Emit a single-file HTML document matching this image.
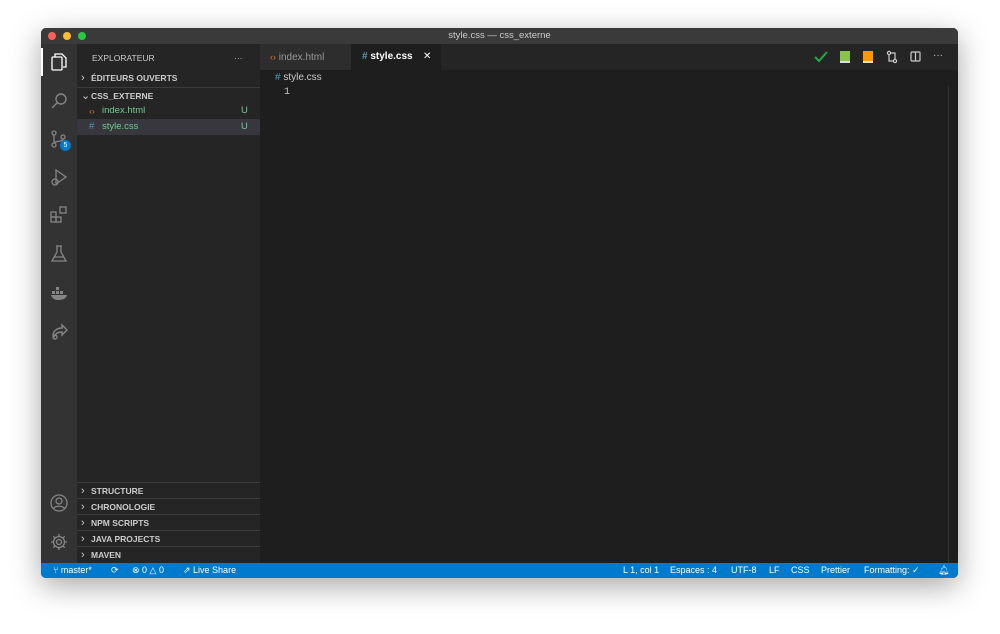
<!DOCTYPE html>
<html><head><meta charset="utf-8"><style>
*{margin:0;padding:0;box-sizing:border-box}
body{width:1000px;height:634px;background:#fff;font-family:"Liberation Sans",sans-serif;position:relative;overflow:hidden}
.win{position:absolute;left:41px;top:28px;width:917px;height:550px;background:#1e1e1e;border-radius:5px;overflow:hidden;box-shadow:0 8px 30px rgba(0,0,0,.35)}
.title{position:absolute;left:0;top:0;width:100%;height:16px;background:#3a3a3a;color:#ccc;font-size:9.5px;text-align:center;line-height:16px}
.dot{position:absolute;top:4px;width:8px;height:8px;border-radius:50%}
.act{position:absolute;left:0;top:16px;width:36px;height:519px;background:#333}
.side{position:absolute;left:36px;top:16px;width:183px;height:519px;background:#252526;color:#ccc;font-size:9.5px}
.row{position:absolute;left:0;width:183px;height:16px;line-height:16px}
.b{font-weight:bold;font-size:8.5px;padding-left:4px}
.sep{border-top:1px solid #3c3c3c}
.tabs{position:absolute;left:219px;top:16px;width:698px;height:26px;background:#252526}
.status{position:absolute;left:0;top:535px;width:100%;height:15px;background:#007acc;color:#fff;font-size:9px;line-height:15px}
.status span{position:absolute}
.ic{position:absolute;left:9px}
.ch{display:inline-block;width:10px;font-weight:normal;font-size:11px}
</style></head><body>
<div class="win">
<div class="title">style.css — css_externe
<div class="dot" style="left:7px;background:#fe5f57"></div><div class="dot" style="left:22px;background:#febc2e"></div><div class="dot" style="left:37px;background:#28c840"></div></div>
<div class="act">
<div style="position:absolute;left:0;top:4px;width:2px;height:28px;background:#fff"></div>
<svg class="ic" style="top:8px" width="18" height="20" viewBox="0 0 18 20" fill="none" stroke="#fff" stroke-width="1.3"><path d="M5 5V2h7l4 4v9h-3"/><rect x="2" y="5" width="10" height="13" rx="1"/></svg>
<svg class="ic" style="top:48px" width="18" height="18" fill="none" stroke="#858585" stroke-width="1.4"><circle cx="11" cy="7" r="5"/><path d="M7.5 10.5L2 16"/></svg>
<svg class="ic" style="top:86px" width="18" height="18" fill="none" stroke="#858585" stroke-width="1.3"><circle cx="4" cy="3" r="2"/><circle cx="4" cy="15" r="2"/><circle cx="13" cy="7" r="2"/><path d="M4 5v8M13 9c0 3-9 2-9 4"/></svg>
<div style="position:absolute;left:19px;top:96px;width:11px;height:11px;border-radius:50%;background:#007acc;color:#fff;font-size:7px;text-align:center;line-height:11px">5</div>
<svg class="ic" style="top:124px" width="18" height="18" fill="none" stroke="#858585" stroke-width="1.3"><path d="M6 2l10 7-10 7z"/><circle cx="5" cy="14" r="3"/></svg>
<svg class="ic" style="top:162px" width="18" height="18" fill="none" stroke="#858585" stroke-width="1.3"><rect x="1" y="6" width="5" height="5"/><rect x="1" y="11" width="5" height="5"/><rect x="6" y="11" width="5" height="5"/><rect x="10" y="1" width="6" height="6"/></svg>
<svg class="ic" style="top:201px" width="18" height="18" fill="none" stroke="#858585" stroke-width="1.3"><path d="M6 1h6M7 1v6l-5 9h14l-5-9V1M4 12h10"/></svg>
<svg class="ic" style="top:240px" width="18" height="18" fill="#858585"><rect x="2" y="7" width="3" height="3"/><rect x="6" y="7" width="3" height="3"/><rect x="10" y="7" width="3" height="3"/><rect x="6" y="3" width="3" height="3"/><path d="M1 11h16c-1 4-5 5-9 5s-6-2-7-5z"/></svg>
<svg class="ic" style="top:278px" width="18" height="18" fill="none" stroke="#858585" stroke-width="1.4"><path d="M3 14c0-5 4-8 9-8V3l5 5-5 5v-3c-4 0-6 1-8 5"/><circle cx="5" cy="15" r="2"/></svg>
<svg class="ic" style="top:450px" width="18" height="18" fill="none" stroke="#858585" stroke-width="1.3"><circle cx="9" cy="9" r="8"/><circle cx="9" cy="7" r="3"/><path d="M3.5 14.5c2-3 9-3 11 0"/></svg>
<svg class="ic" style="top:489px" width="18" height="18" fill="none" stroke="#858585" stroke-width="1.3"><circle cx="9" cy="9" r="2.5"/><path d="M9 1v3M9 14v3M1 9h3M14 9h3M3.3 3.3l2.1 2.1M12.6 12.6l2.1 2.1M3.3 14.7l2.1-2.1M12.6 5.4l2.1-2.1"/><circle cx="9" cy="9" r="5.5"/></svg>
</div>
<div class="side">
<div class="row" style="top:6px;padding-left:15px;font-size:8.5px">EXPLORATEUR<span style="position:absolute;left:157px">···</span></div>
<div class="row b" style="top:26px"><span class="ch">›</span>ÉDITEURS OUVERTS</div>
<div class="row b sep" style="top:43px"><span class="ch">⌄</span>CSS_EXTERNE</div>
<div class="row" style="top:59px;color:#73c991"><span style="position:absolute;left:12px;color:#e37933;font-size:8.5px">‹›</span><span style="position:absolute;left:25px">index.html</span><span style="position:absolute;left:164px">U</span></div>
<div class="row" style="top:75px;background:#37373d;color:#73c991"><span style="position:absolute;left:12px;color:#519aba">#</span><span style="position:absolute;left:25px">style.css</span><span style="position:absolute;left:164px">U</span></div>
<div class="row b sep" style="top:438px"><span class="ch">›</span>STRUCTURE</div>
<div class="row b sep" style="top:454px"><span class="ch">›</span>CHRONOLOGIE</div>
<div class="row b sep" style="top:470px"><span class="ch">›</span>NPM SCRIPTS</div>
<div class="row b sep" style="top:486px"><span class="ch">›</span>JAVA PROJECTS</div>
<div class="row b sep" style="top:502px"><span class="ch">›</span>MAVEN</div>
</div>
<div class="tabs">
<div style="position:absolute;left:0;top:0;width:91px;height:26px;background:#2d2d2d;color:#999;font-size:10px;line-height:26px"><span style="color:#e37933;font-size:9px;margin-left:10px">‹›</span> index.html</div>
<div style="position:absolute;left:91px;top:0;width:90px;height:26px;background:#1e1e1e;color:#fff;font-size:10px;line-height:26px;font-weight:bold"><span style="color:#519aba;margin-left:11px">#</span> style.css<span style="position:absolute;left:72px;font-weight:normal">✕</span></div>
<svg style="position:absolute;left:554px;top:7px" width="14" height="12" fill="none" stroke="#22a846" stroke-width="2"><path d="M1 6l4 4 8-9"/></svg>
<div style="position:absolute;left:580px;top:7px;width:10px;height:12px;background:#8bc34a;border-bottom:2px solid #ddd"></div>
<div style="position:absolute;left:603px;top:7px;width:10px;height:12px;background:#ff9800;border-bottom:2px solid #ddd"></div>
<svg style="position:absolute;left:626px;top:6px" width="12" height="14" fill="none" stroke="#ccc" stroke-width="1.2"><circle cx="3" cy="3" r="1.6"/><circle cx="9" cy="11" r="1.6"/><path d="M3 5v6h4M9 9V3H5"/></svg>
<svg style="position:absolute;left:650px;top:7px" width="11" height="11" fill="none" stroke="#ccc" stroke-width="1.2"><rect x="1" y="1" width="9" height="9" rx="1"/><path d="M5.5 1v9"/></svg>
<div style="position:absolute;left:673px;top:6px;color:#ccc;font-size:10px">···</div>
</div>
<div style="position:absolute;left:234px;top:44px;color:#ccc;font-size:10px"><span style="color:#519aba">#</span> style.css</div>
<div style="position:absolute;left:243px;top:59px;color:#c6c6c6;font-size:10px;font-family:'Liberation Mono',monospace">1</div>
<div style="position:absolute;left:907px;top:58px;width:1px;height:477px;background:#333"></div>
<div class="status">
<span style="left:12px">⑂ master*</span><span style="left:70px">⟳</span><span style="left:91px">⊗ 0 △ 0</span><span style="left:142px">⇗ Live Share</span>
<span style="left:582px">L 1, col 1</span><span style="left:629px">Espaces : 4</span><span style="left:690px">UTF-8</span><span style="left:728px">LF</span><span style="left:750px">CSS</span><span style="left:780px">Prettier</span><span style="left:823px">Formatting: ✓</span><span style="left:897px">🔔︎</span>
</div>
</div>
</body></html>
